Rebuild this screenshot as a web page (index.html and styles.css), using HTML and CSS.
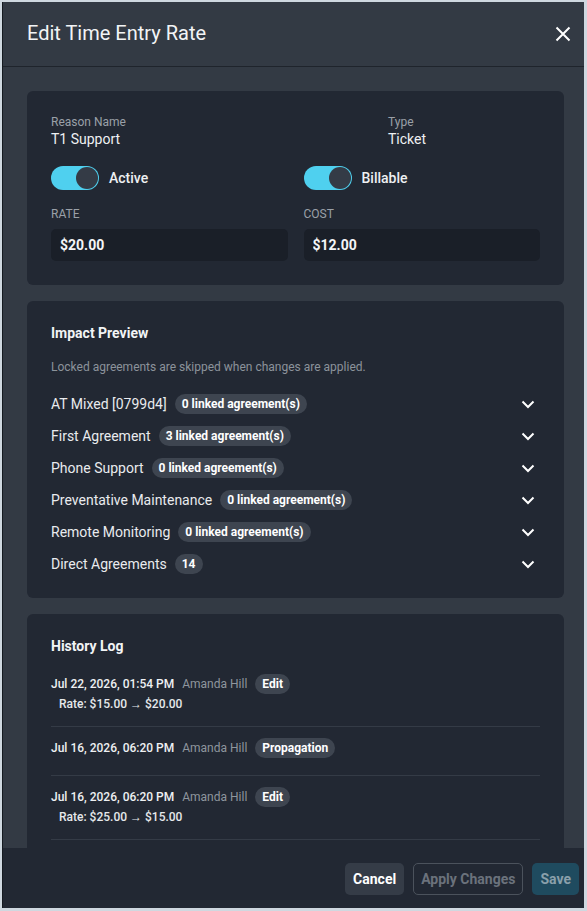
FILE: index.html
```html
<!DOCTYPE html>
<html lang="en">
<head>
  <meta charset="UTF-8">
  <meta name="viewport" content="width=device-width, initial-scale=1.0">
  <title>Edit Time Entry Rate</title>
  <link rel="stylesheet" href="styles.css">
</head>
<body>
  <div class="dialog">
    <header class="dialog-header">
      <h2>Edit Time Entry Rate</h2>
      <button class="close-btn" aria-label="Close">
        <svg width="16" height="16" viewBox="0 0 16 16"><path d="M1.5 1.5 14.5 14.5M14.5 1.5 1.5 14.5" stroke="currentColor" stroke-width="2" fill="none"/></svg>
      </button>
    </header>

    <div class="dialog-body">
      <!-- rate details -->
      <section class="card">
        <div class="info-row">
          <div>
            <div class="field-label">Reason Name</div>
            <div class="field-value">T1 Support</div>
          </div>
          <div>
            <div class="field-label">Type</div>
            <div class="field-value">Ticket</div>
          </div>
        </div>

        <div class="two-col toggle-row">
          <label class="switch-field">
            <span class="switch on"><span class="knob"></span></span>
            Active
          </label>
          <label class="switch-field">
            <span class="switch on"><span class="knob"></span></span>
            Billable
          </label>
        </div>

        <div class="two-col input-row">
          <div class="form-group">
            <label class="caps-label" for="rate">Rate</label>
            <input id="rate" class="money-input" value="$20.00" readonly>
          </div>
          <div class="form-group">
            <label class="caps-label" for="cost">Cost</label>
            <input id="cost" class="money-input" value="$12.00" readonly>
          </div>
        </div>
      </section>

      <!-- impact preview -->
      <section class="card impact-card">
        <h3 class="section-title">Impact Preview</h3>
        <p class="hint">Locked agreements are skipped when changes are applied.</p>
        <div class="impact-list" id="impactList"></div>
      </section>

      <!-- history -->
      <section class="card history-card">
        <h3 class="section-title">History Log</h3>
        <div id="historyList"></div>
      </section>
    </div>

    <footer class="dialog-footer">
      <button class="btn btn-secondary">Cancel</button>
      <button class="btn btn-outline" disabled>Apply Changes</button>
      <button class="btn btn-primary" disabled>Save</button>
    </footer>
  </div>

  <script>
    const impact = [
      { name: 'AT Mixed [0799d4]', badge: '0 linked agreement(s)' },
      { name: 'First Agreement', badge: '3 linked agreement(s)' },
      { name: 'Phone Support', badge: '0 linked agreement(s)' },
      { name: 'Preventative Maintenance', badge: '0 linked agreement(s)' },
      { name: 'Remote Monitoring', badge: '0 linked agreement(s)' },
      { name: 'Direct Agreements', badge: '14' }
    ];

    const history = [
      { when: 'Jul 22, 2026, 01:54 PM', who: 'Amanda Hill', type: 'Edit', change: 'Rate: $15.00 → $20.00' },
      { when: 'Jul 16, 2026, 06:20 PM', who: 'Amanda Hill', type: 'Propagation', change: '' },
      { when: 'Jul 16, 2026, 06:20 PM', who: 'Amanda Hill', type: 'Edit', change: 'Rate: $25.00 → $15.00' }
    ];

    const chevron = '<svg width="16" height="16" viewBox="0 0 16 16"><polyline points="2.5 5.5 8 11 13.5 5.5" stroke="currentColor" stroke-width="2" fill="none"/></svg>';

    const impactList = document.getElementById('impactList');
    impact.forEach(item => {
      const row = document.createElement('div');
      row.className = 'impact-row';
      row.innerHTML = `<span class="impact-name">${item.name}</span>
        <span class="badge">${item.badge}</span>
        <span class="chevron">${chevron}</span>`;
      impactList.appendChild(row);
    });

    const historyList = document.getElementById('historyList');
    history.forEach(h => {
      const entry = document.createElement('div');
      entry.className = 'history-entry';
      entry.innerHTML = `<div class="history-head">
          <span class="history-date">${h.when}</span>
          <span class="history-user">${h.who}</span>
          <span class="badge">${h.type}</span>
        </div>
        <div class="history-change">${h.change}</div>`;
      historyList.appendChild(entry);
    });
  </script>
</body>
</html>
```

FILE: styles.css
```css
:root {
  --page-bg: #cfd8e0;
  --dialog-bg: #333a44;
  --card-bg: #222833;
  --input-bg: #1a1f28;
  --badge-bg: #3e4550;
  --text: #eef0f2;
  --muted: #9aa0a8;
  --accent: #4fd0ef;
  --line: #343b46;
}

* {
  box-sizing: border-box;
}

body {
  margin: 0;
  background: var(--page-bg);
  font-family: Roboto, 'Liberation Sans', sans-serif;
  color: var(--text);
}

.dialog {
  margin: 2px 3px 3px 2px;
  height: 906px;
  background: var(--dialog-bg);
  border-left: 1px solid #151a20;
  display: flex;
  flex-direction: column;
  overflow: hidden;
}

.dialog-header {
  height: 65px;
  flex-shrink: 0;
  display: flex;
  align-items: center;
  justify-content: space-between;
  padding: 0 13px 0 24px;
  border-bottom: 1px solid #1f242c;
}

.dialog-header h2 {
  margin: 0;
  font-size: 20px;
  font-weight: 400;
  color: #f2f4f6;
  padding-bottom: 2px;
}

.close-btn {
  background: none;
  border: none;
  padding: 0;
  color: #fff;
  display: flex;
  cursor: pointer;
}

.dialog-body {
  flex: 1;
  overflow: hidden;
  padding: 24px 20px 0 24px;
  display: flex;
  flex-direction: column;
  gap: 16px;
}

.card {
  background: var(--card-bg);
  border-radius: 6px;
  padding: 24px;
  flex-shrink: 0;
}

/* rate details */
.info-row {
  display: grid;
  grid-template-columns: 1fr 152px;
}

.field-label {
  font-size: 12px;
  line-height: 14px;
  color: var(--muted);
}

.field-value {
  font-size: 14px;
  line-height: 17px;
  margin-top: 2px;
}

.two-col {
  display: grid;
  grid-template-columns: 1fr 1fr;
  gap: 16px;
}

.toggle-row {
  margin-top: 18px;
}

.switch-field {
  display: flex;
  align-items: center;
  gap: 10px;
  font-size: 14px;
  font-weight: 500;
}

.switch {
  width: 48px;
  height: 24px;
  border-radius: 12px;
  background: #4a515c;
  display: flex;
  align-items: center;
  padding: 1px;
}

.switch.on {
  background: var(--accent);
  justify-content: flex-end;
}

.knob {
  width: 22px;
  height: 22px;
  border-radius: 50%;
  background: #343b46;
}

.input-row {
  margin-top: 17px;
}

.caps-label {
  display: block;
  font-size: 12px;
  line-height: 14px;
  text-transform: uppercase;
  color: var(--muted);
  margin-bottom: 8px;
}

.money-input {
  width: 100%;
  height: 32px;
  border: none;
  border-radius: 5px;
  background: var(--input-bg);
  color: #f4f5f7;
  font-family: inherit;
  font-size: 14px;
  font-weight: 700;
  padding: 0 9px;
  outline: none;
}

/* shared section headings */
.section-title {
  margin: 0;
  font-size: 14px;
  line-height: 17px;
  font-weight: 700;
  color: #f2f4f6;
}

.hint {
  margin: 18px 0 0;
  font-size: 12px;
  line-height: 14px;
  color: #8c939b;
}

.badge {
  display: inline-block;
  height: 20px;
  line-height: 20px;
  padding: 0 7px;
  border-radius: 10px;
  background: var(--badge-bg);
  color: #fff;
  font-size: 12px;
  font-weight: 700;
  white-space: nowrap;
}

/* impact preview */
.impact-card {
  padding-bottom: 18px;
}

.impact-list {
  margin-top: 14px;
}

.impact-row {
  height: 32px;
  display: flex;
  align-items: center;
  gap: 8px;
}

.impact-name {
  font-size: 14px;
  color: #e9ebee;
}

.chevron {
  margin-left: auto;
  margin-right: 4px;
  display: flex;
  color: #fff;
}

/* history log */
.history-card .section-title {
  margin-bottom: 8px;
}

.history-entry {
  display: flex;
  flex-direction: column;
  gap: 2px;
  padding: 11px 0 14px;
  border-bottom: 1px solid var(--line);
}

.history-head {
  display: flex;
  align-items: center;
  gap: 8px;
  height: 20px;
}

.history-date {
  font-size: 12px;
  font-weight: 500;
  color: #eef0f2;
}

.history-user {
  font-size: 12px;
  color: #8f969e;
}

.history-change {
  font-size: 12px;
  line-height: 16px;
  font-weight: 500;
  padding-left: 8px;
  color: #e6e8eb;
}

.history-change:empty {
  height: 1px;
}

/* footer actions */
.dialog-footer {
  height: 60px;
  flex-shrink: 0;
  background: var(--card-bg);
  display: flex;
  align-items: center;
  justify-content: flex-end;
  gap: 9px;
  padding: 1px 5px 0 0;
}

.btn {
  height: 32px;
  padding: 0 7px;
  border-radius: 5px;
  font-family: inherit;
  font-size: 14px;
  font-weight: 700;
  border: 1px solid transparent;
  cursor: pointer;
}

.btn-secondary {
  background: #353c47;
  color: #fff;
}

.btn-outline {
  background: transparent;
  border-color: #4b525c;
  color: #6b727c;
  cursor: default;
}

.btn-primary {
  background: #1f4b5f;
  color: #8aa0ab;
  cursor: default;
}
```
